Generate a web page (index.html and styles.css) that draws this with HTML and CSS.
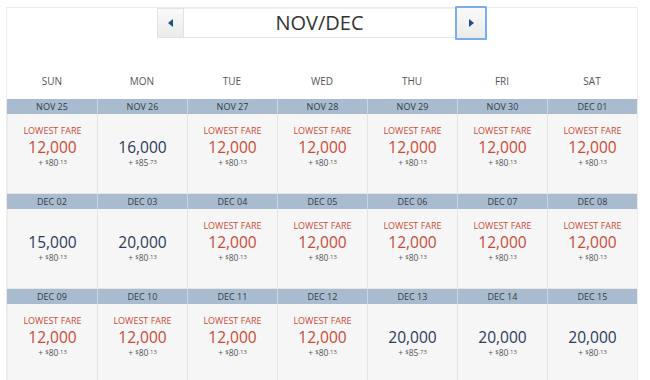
FILE: index.html
```html
<!DOCTYPE html>
<html>
<head>
<meta charset="utf-8">
<link rel="stylesheet" href="styles.css">
</head>
<body>
<div class="calendar">
  <div class="nav">
    <button class="nav-btn prev"><svg width="6" height="8" viewBox="0 0 6 8"><path d="M5 0 L0 4 L5 8 Z" fill="#1f4f8f"/></svg></button>
    <div class="title">NOV/DEC</div>
    <button class="nav-btn next focus"><svg width="6" height="8" viewBox="0 0 6 8"><path d="M1 0 L6 4 L1 8 Z" fill="#1f4f8f"/></svg></button>
  </div>
  <div class="days">
    <div>SUN</div><div>MON</div><div>TUE</div><div>WED</div><div>THU</div><div>FRI</div><div>SAT</div>
  </div>

  <div class="week">
    <div class="date">NOV 25</div><div class="date">NOV 26</div><div class="date">NOV 27</div><div class="date">NOV 28</div><div class="date">NOV 29</div><div class="date">NOV 30</div><div class="date">DEC 01</div>
    <div class="cell low"><div class="label">LOWEST FARE</div><div class="miles">12,000</div><div class="fee">+ <sup>$</sup>80<sup>.13</sup></div></div>
    <div class="cell"><div class="label"></div><div class="miles">16,000</div><div class="fee">+ <sup>$</sup>85<sup>.73</sup></div></div>
    <div class="cell low"><div class="label">LOWEST FARE</div><div class="miles">12,000</div><div class="fee">+ <sup>$</sup>80<sup>.13</sup></div></div>
    <div class="cell low"><div class="label">LOWEST FARE</div><div class="miles">12,000</div><div class="fee">+ <sup>$</sup>80<sup>.13</sup></div></div>
    <div class="cell low"><div class="label">LOWEST FARE</div><div class="miles">12,000</div><div class="fee">+ <sup>$</sup>80<sup>.13</sup></div></div>
    <div class="cell low"><div class="label">LOWEST FARE</div><div class="miles">12,000</div><div class="fee">+ <sup>$</sup>80<sup>.13</sup></div></div>
    <div class="cell low"><div class="label">LOWEST FARE</div><div class="miles">12,000</div><div class="fee">+ <sup>$</sup>80<sup>.13</sup></div></div>
  </div>

  <div class="week">
    <div class="date">DEC 02</div><div class="date">DEC 03</div><div class="date">DEC 04</div><div class="date">DEC 05</div><div class="date">DEC 06</div><div class="date">DEC 07</div><div class="date">DEC 08</div>
    <div class="cell"><div class="label"></div><div class="miles">15,000</div><div class="fee">+ <sup>$</sup>80<sup>.13</sup></div></div>
    <div class="cell"><div class="label"></div><div class="miles">20,000</div><div class="fee">+ <sup>$</sup>80<sup>.13</sup></div></div>
    <div class="cell low"><div class="label">LOWEST FARE</div><div class="miles">12,000</div><div class="fee">+ <sup>$</sup>80<sup>.13</sup></div></div>
    <div class="cell low"><div class="label">LOWEST FARE</div><div class="miles">12,000</div><div class="fee">+ <sup>$</sup>80<sup>.13</sup></div></div>
    <div class="cell low"><div class="label">LOWEST FARE</div><div class="miles">12,000</div><div class="fee">+ <sup>$</sup>80<sup>.13</sup></div></div>
    <div class="cell low"><div class="label">LOWEST FARE</div><div class="miles">12,000</div><div class="fee">+ <sup>$</sup>80<sup>.13</sup></div></div>
    <div class="cell low"><div class="label">LOWEST FARE</div><div class="miles">12,000</div><div class="fee">+ <sup>$</sup>80<sup>.13</sup></div></div>
  </div>

  <div class="week">
    <div class="date">DEC 09</div><div class="date">DEC 10</div><div class="date">DEC 11</div><div class="date">DEC 12</div><div class="date">DEC 13</div><div class="date">DEC 14</div><div class="date">DEC 15</div>
    <div class="cell low"><div class="label">LOWEST FARE</div><div class="miles">12,000</div><div class="fee">+ <sup>$</sup>80<sup>.13</sup></div></div>
    <div class="cell low"><div class="label">LOWEST FARE</div><div class="miles">12,000</div><div class="fee">+ <sup>$</sup>80<sup>.13</sup></div></div>
    <div class="cell low"><div class="label">LOWEST FARE</div><div class="miles">12,000</div><div class="fee">+ <sup>$</sup>80<sup>.13</sup></div></div>
    <div class="cell low"><div class="label">LOWEST FARE</div><div class="miles">12,000</div><div class="fee">+ <sup>$</sup>80<sup>.13</sup></div></div>
    <div class="cell"><div class="label"></div><div class="miles">20,000</div><div class="fee">+ <sup>$</sup>85<sup>.73</sup></div></div>
    <div class="cell"><div class="label"></div><div class="miles">20,000</div><div class="fee">+ <sup>$</sup>80<sup>.13</sup></div></div>
    <div class="cell"><div class="label"></div><div class="miles">20,000</div><div class="fee">+ <sup>$</sup>80<sup>.13</sup></div></div>
  </div>
</div>
</body>
</html>
```

FILE: styles.css
```css
html, body {
  margin: 0;
  padding: 0;
  background: #ffffff;
  font-family: "Open Sans", "Liberation Sans", sans-serif;
  overflow: hidden;
}

.calendar {
  margin: 7px 0 0 6px;
  width: 630px;
  border: 1px solid #ececec;
  border-bottom: none;
  height: 380px;
}

.nav {
  display: flex;
  justify-content: center;
  align-items: center;
  height: 31px;
  margin-top: -1px;
}

.nav-btn {
  box-sizing: border-box;
  width: 27px;
  height: 30px;
  padding: 0;
  margin: 0;
  border: 1px solid #e2e2e2;
  background: linear-gradient(#fafafa, #ebebeb);
  display: flex;
  align-items: center;
  justify-content: center;
}

.nav-btn.focus {
  width: 32px;
  height: 34px;
  border: 2px solid #76aef0;
  border-radius: 1px;
}

.title {
  box-sizing: border-box;
  width: 271px;
  height: 30px;
  border-top: 1px solid #f0f0f0;
  border-bottom: 1px solid #e6e6e6;
  text-align: center;
  font-size: 20px;
  line-height: 28px;
  color: #333333;
}

.days {
  display: grid;
  grid-template-columns: repeat(7, 90px);
  margin-top: 36px;
  height: 25px;
  font-size: 10px;
  line-height: 14px;
  color: #555555;
  text-align: center;
}

.week {
  display: grid;
  grid-template-columns: repeat(7, 90px);
  grid-template-rows: 15px 79px;
  border-bottom: 1px solid #e6e6e6;
}

.date {
  box-sizing: border-box;
  background: #a9bccf;
  border-left: 1px solid #c9d5e0;
  font-size: 9px;
  line-height: 15px;
  text-align: center;
  color: #2f3a45;
}

.date:first-child {
  border-left: none;
}

.cell {
  box-sizing: border-box;
  background: #f6f6f6;
  border-left: 1px solid #e4e4e4;
  padding-top: 11px;
  text-align: center;
}

.cell:nth-child(8) {
  border-left: 1px solid #ececec;
}

.label {
  height: 12px;
  font-size: 9px;
  line-height: 12px;
  color: #cc4a35;
}

.miles {
  font-size: 15.5px;
  line-height: 20px;
  color: #2b3a5c;
}

.low .miles {
  color: #cc4a35;
}

.fee {
  font-size: 8.5px;
  line-height: 12px;
  color: #555555;
}

.fee sup {
  font-size: 6px;
  vertical-align: 2px;
  line-height: 0;
}
```
